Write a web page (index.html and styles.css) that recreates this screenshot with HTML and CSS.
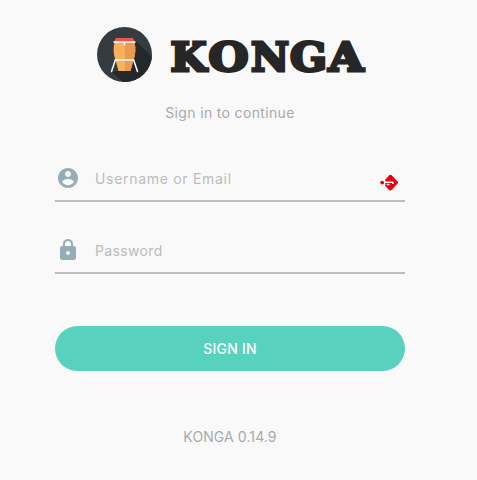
FILE: index.html
```
<!DOCTYPE html>
<html>

<head>
  <meta charset="utf-8">
  <title>Konga</title>
  <meta name="viewport" content="width=device-width, initial-scale=1">
  <link rel="stylesheet" href="styles.css">
</head>
<body>
  <div class="login">
    <div class="brand">
      <svg class="brand-icon" viewBox="0 0 55 55">
        <defs>
          <clipPath id="disc"><circle cx="27.5" cy="27.5" r="27.5"/></clipPath>
        </defs>
        <circle cx="27.5" cy="27.5" r="27.5" fill="#343c42"/>
        <path d="M38 13L57 32V56H27L15 45L34 42Z" fill="#24282b" clip-path="url(#disc)"/>
        <path d="M19 11H36L38 15H17Z" fill="#e9574e"/>
        <path d="M17.5 15H37.5C39 22 38.5 28 36.5 33L33.5 44H21.5L18.5 33C16.5 28 16 22 17.5 15Z" fill="#fbae5c"/>
        <path d="M28 15H37.5C39 22 38.5 28 36.5 33L33.5 44H28Z" fill="#e99b4f"/>
        <path d="M17 15H38M18 33H37M18 34L14.5 44.5M37 34L40.5 44.5" stroke="#fff" stroke-width="1.5" stroke-linecap="round" fill="none"/>
        <path d="M27.5 15V18.5" stroke="#fff" stroke-width="1.5"/>
      </svg>
      <svg class="brand-name" viewBox="0 0 204 55">
        <text class="wordmark" x="2.5" y="43.5">
          <tspan x="3.5" textLength="36" lengthAdjust="spacingAndGlyphs">K</tspan>
          <tspan x="41.5" textLength="40" lengthAdjust="spacingAndGlyphs">O</tspan>
          <tspan x="84" textLength="38" lengthAdjust="spacingAndGlyphs">N</tspan>
          <tspan x="123" textLength="37" lengthAdjust="spacingAndGlyphs">G</tspan>
          <tspan x="161.5" textLength="35" lengthAdjust="spacingAndGlyphs">A</tspan>
        </text>
      </svg>
    </div>
    <p class="subtitle">Sign in to continue</p>
    <form class="login-form">
      <div class="field">
        <svg class="field-icon" viewBox="0 0 24 24">
          <path d="M12 2C6.48 2 2 6.48 2 12s4.48 10 10 10 10-4.48 10-10S17.52 2 12 2zm0 3c1.66 0 3 1.34 3 3s-1.34 3-3 3-3-1.34-3-3 1.34-3 3-3zm0 14.2c-2.5 0-4.71-1.28-6-3.22.03-1.99 4-3.08 6-3.08 1.99 0 5.97 1.09 6 3.08-1.29 1.94-3.5 3.22-6 3.22z"/>
        </svg>
        <input class="field-input username" type="text" placeholder="Username or Email">
        <svg class="field-badge" viewBox="0 0 20 20">
          <path d="M5.5 6L9.500 1.5Q11 0 12.5 1.5L18.7 8.2Q19.3 9 18.7 9.8L12.5 16.5Q11 18 9.5 16.5L5.5 12.5Z" fill="#e60012"/>
          <circle cx="2.3" cy="9" r="2" fill="#e60012"/>
          <path d="M5 8.6H13.5V10.5M7 11H10" stroke="#fff" stroke-width="1.5" fill="none"/>
        </svg>
      </div>
      <div class="field">
        <svg class="field-icon" viewBox="0 0 24 24">
          <path d="M18 8h-1V6c0-2.76-2.24-5-5-5S7 3.24 7 6v2H6c-1.1 0-2 .9-2 2v10c0 1.1.9 2 2 2h12c1.1 0 2-.9 2-2V10c0-1.1-.9-2-2-2zm-6 9c-1.1 0-2-.9-2-2s.9-2 2-2 2 .9 2 2-.9 2-2 2zm3.1-9H8.900V6c0-1.710 1.390-3.1 3.1-3.1s3.1 1.390 3.1 3.1v2z"/>
        </svg>
        <input class="field-input password" type="password" placeholder="Password">
      </div>
      <button class="submit" type="button">SIGN IN</button>
    </form>
    <p class="version">KONGA 0.14.9</p>
  </div>
</body>
</html>
```
FILE: styles.css
```
/* basic style */
* {
  box-sizing: border-box;
}

body {
  margin: 0;
  background: #f9f9f9;
  color: #a9a9a9;
  font-family: Inter, "Open Sans", sans-serif;
  font-size: 14px;
}

.login {
  width: 350px;
  margin-left: 55px;
  padding-top: 27px;
}

/* logo */
.brand {
  display: flex;
  height: 55px;
  padding-left: 42px;
}

.brand-icon {
  width: 55px;
  height: 55px;
}

.brand-name {
  width: 204px;
  height: 55px;
  margin-left: 15px;
}

.wordmark {
  font-family: "DejaVu Serif", serif;
  font-size: 40px;
  font-weight: bold;
  fill: #262626;
  stroke: #262626;
  stroke-width: 3px;
}

.subtitle {
  margin: 21px 0 0;
  line-height: 20px;
  text-align: center;
  letter-spacing: .35px;
}

/* form */
.login-form {
  margin-top: 34px;
}

.field {
  display: flex;
  align-items: center;
  height: 45px;
  margin-bottom: 27px;
  padding-left: 1px;
  border-bottom: 2px solid #bdbdbd;
}

.field-icon {
  width: 24px;
  height: 24px;
  margin-top: -1px;
  fill: #96adb8;
}

.field-input {
  width: 260px;
  height: 40px;
  margin-left: 15px;
  padding: 0;
  border: 0;
  background: transparent;
  font: 14px Inter, "Open Sans", sans-serif;
  letter-spacing: .35px;
}

.username {
  letter-spacing: .7px;
}

.field-input::placeholder {
  color: #bcbcbc;
}

.field-badge {
  width: 19px;
  height: 19px;
  margin: 10px 0 0 25px;
}

.submit {
  display: block;
  width: 350px;
  height: 45px;
  margin-top: 52px;
  border: 0;
  border-radius: 23px;
  background: #58d1be;
  color: #fff;
  font: 500 14px Inter, "Open Sans", sans-serif;
  letter-spacing: .2px;
}

.version {
  margin: 56px 0 0;
  line-height: 20px;
  text-align: center;
  letter-spacing: .1px;
}
```
